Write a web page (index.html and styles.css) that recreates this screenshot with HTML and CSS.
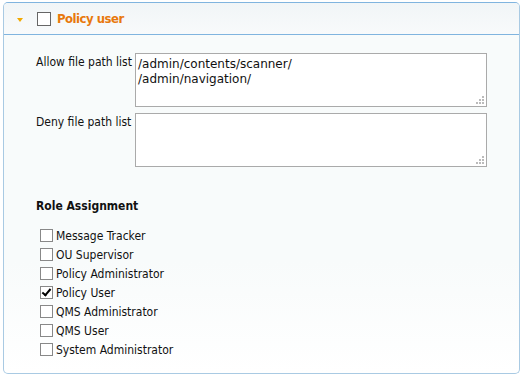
FILE: index.html
```html
<!DOCTYPE html>
<html lang="en">
<head>
    <meta charset="UTF-8">
    <title>Policy user</title>
    <link rel="stylesheet" href="styles.css">
</head>
<body>

    <div class="panel">
        <div class="panel-head">
            <span class="arrow"></span>
            <span class="cb"></span>
            <span class="title">Policy user</span>
        </div>
        <div class="panel-body">
            <div class="field">
                <label>Allow file path list</label>
                <div class="area">
                    <textarea>/admin/contents/scanner/
/admin/navigation/</textarea>
                    <svg class="grip" width="8" height="8" viewBox="0 0 8 8"><path d="M6 0h2v2H6zM3 3h2v2H3zM6 3h2v2H6zM0 6h2v2H0zM3 6h2v2H3zM6 6h2v2H6z" fill="#bbb"/></svg>
                </div>
            </div>
            <div class="field">
                <label>Deny file path list</label>
                <div class="area">
                    <textarea></textarea>
                    <svg class="grip" width="8" height="8" viewBox="0 0 8 8"><path d="M6 0h2v2H6zM3 3h2v2H3zM6 3h2v2H6zM0 6h2v2H0zM3 6h2v2H3zM6 6h2v2H6z" fill="#bbb"/></svg>
                </div>
            </div>

            <h3>Role Assignment</h3>
            <ul class="roles">
                <li><span class="cb"></span>Message Tracker</li>
                <li><span class="cb"></span>OU Supervisor</li>
                <li><span class="cb"></span>Policy Administrator</li>
                <li><span class="cb checked"></span>Policy User</li>
                <li><span class="cb"></span>QMS Administrator</li>
                <li><span class="cb"></span>QMS User</li>
                <li><span class="cb"></span>System Administrator</li>
            </ul>
        </div>
    </div>

</body>
</html>
```

FILE: styles.css
```css
body { margin: 0; background: #fff; font-family: "DejaVu Sans Condensed", "DejaVu Sans", Verdana, sans-serif; font-size: 12px; color: #111; }
.panel { margin: 2px 2px 0 3px; border: 1px solid #a9cae3; border-top-color: #80b4df; border-radius: 5px; height: 372px; box-sizing: border-box; background: linear-gradient(#f8fbfb 70%, #fff); overflow: hidden; }
.panel-head { height: 31px; border-bottom: 1px solid #80b4df; background: linear-gradient(#f1f5f7, #f8fafb); display: flex; align-items: center; border-left: 1px solid #80b4df; border-right: 1px solid #80b4df; margin: 0 -1px; }
.arrow { width: 0; height: 0; border-left: 3.5px solid transparent; border-right: 3.5px solid transparent; border-top: 4px solid #f2a900; margin: 2px 0 0 13px; }
.panel-head .cb { margin: 0 0 0 14px; width: 12px; height: 12px; border-color: #666; }
.title { margin-left: 6px; color: #e8780c; font-weight: bold; font-size: 13px; letter-spacing: -0.5px; }
.panel-body { padding: 18px 0 0 32px; }
.field { display: flex; margin-bottom: 6px; }
.field label { width: 99px; padding-top: 2px; }
.area { position: relative; }
.area textarea { display: block; width: 352px; height: 54px; box-sizing: border-box; border: 1px solid #aaa; padding: 3px 2px; resize: none; font-family: "DejaVu Sans", Verdana, sans-serif; font-size: 12px; line-height: 15px; color: #111; background: #fff; }
.grip { position: absolute; right: 3px; bottom: 3px; }
h3 { margin: 32px 0 13px; font-size: 12px; font-weight: bold; }
.roles { list-style: none; margin: 0; padding: 0 0 0 4px; }
.roles li { display: flex; align-items: center; height: 19px; }
.cb { display: inline-block; width: 11px; height: 11px; border: 1px solid #888; background: #fff; margin-right: 3px; position: relative; flex: none; }
.cb.checked::after { content: ""; position: absolute; left: 3px; top: 0px; width: 3px; height: 7px; border: solid #000; border-width: 0 2px 2px 0; transform: rotate(40deg); }
```
